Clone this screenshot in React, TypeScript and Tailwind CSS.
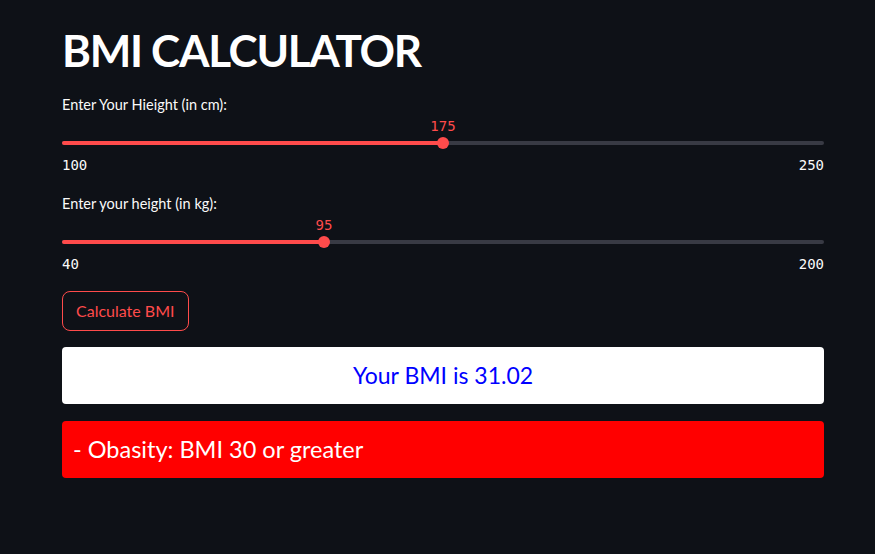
const Slider = ({ label, value, min, max }: { label: string; value: number; min: number; max: number }) => {
  const pct = ((value - min) / (max - min)) * 100;
  return (
    <div className="flex flex-col">
      <label className="text-[14.5px] leading-[20px] text-[#fafafa]">{label}</label>
      <div className="relative h-[38px]">
        <div className="absolute left-0 right-0 top-[26px] h-[4px] rounded bg-[#383a44]" />
        <div className="absolute left-0 top-[26px] h-[4px] rounded bg-[#ff4b4b]" style={{ width: `${pct}%` }} />
        <div
          className="absolute top-[22px] w-[12px] h-[12px] -ml-[6px] rounded-full bg-[#ff4b4b]"
          style={{ left: `${pct}%` }}
        />
        <div
          className="absolute top-[1px] leading-[20px] -translate-x-1/2 text-[14px] text-[#ff4b4b] font-['DejaVu_Sans_Mono',monospace]"
          style={{ left: `${pct}%` }}
        >
          {value}
        </div>
      </div>
      <div className="mt-[2px] flex justify-between text-[14px] leading-[20px] text-[#fafafa] font-['DejaVu_Sans_Mono',monospace]">
        <span>{min}</span>
        <span>{max}</span>
      </div>
    </div>
  );
};

export default function App() {
  return (
    <div className="min-h-[554px] bg-[#0e1117] font-['Lato',sans-serif]">
      <div className="pl-[62px] pr-[51px] pt-[24px] flex flex-col">
        <h1 className="text-[44px] leading-[52px] font-bold text-white tracking-[-1.3px]">BMI CALCULATOR</h1>
        <div className="mt-[19px] flex flex-col gap-[19px]">
          <Slider label="Enter Your Hieight (in cm):" value={175} min={100} max={250} />
          <Slider label="Enter your height (in kg):" value={95} min={40} max={200} />
        </div>
        <button className="mt-[17px] self-start h-[40px] px-[13px] rounded-[8px] border border-[#ff4b4b] text-[#ff4b4b] text-[16px] bg-[#0e1117]">
          Calculate BMI
        </button>
        <div className="mt-[16px] h-[57px] rounded-[4px] bg-white flex items-center justify-center text-[#0000ff] text-[23px]">
          Your BMI is 31.02
        </div>
        <div className="mt-[17px] h-[57px] rounded-[4px] bg-[#ff0000] flex items-center px-[11px] text-white text-[23.5px]">
          - Obasity: BMI 30 or greater
        </div>
      </div>
    </div>
  );
}
